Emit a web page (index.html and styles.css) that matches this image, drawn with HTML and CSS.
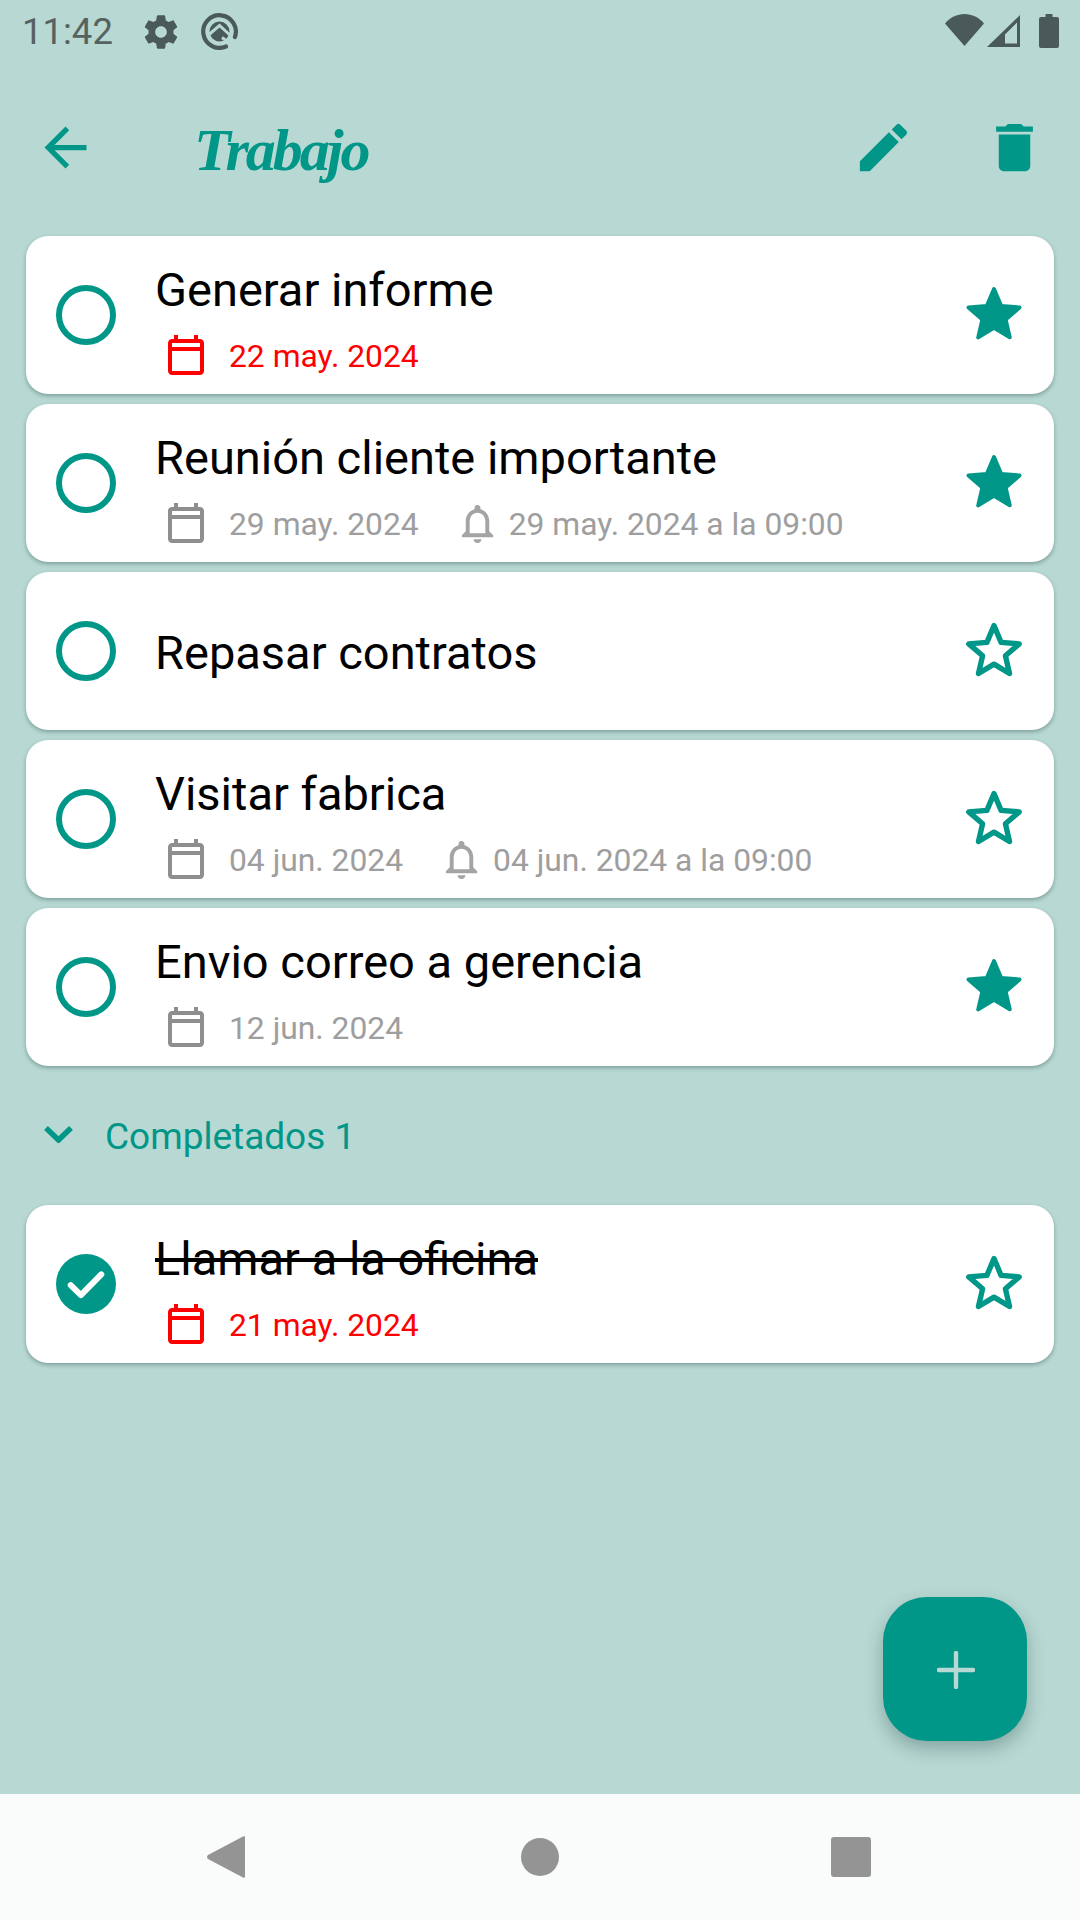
FILE: index.html
```html
<!DOCTYPE html>
<html lang="es">
<head>
<meta charset="utf-8">
<title>Trabajo</title>
<link rel="stylesheet" href="styles.css">
</head>
<body>
<!-- iconos reutilizables -->
<svg class="sprite" width="0" height="0">
  <symbol id="i-radio" viewBox="0 0 24 24"><circle cx="12" cy="12" r="9" fill="none" stroke="currentColor" stroke-width="2"/></symbol>
  <symbol id="i-done" viewBox="0 0 24 24"><circle cx="12" cy="12" r="10" fill="currentColor"/><path d="M6.900 12.400l3.400 3.300 6.800-6.900" fill="none" stroke="#fff" stroke-width="2" stroke-linecap="round" stroke-linejoin="round"/></symbol>
  <symbol id="i-star" viewBox="0 0 24 24"><path d="M12 3.200l2.550 5.950 6.450.55-4.900 4.250 1.470 6.300L12 16.900l-5.570 3.350 1.470-6.300L3 9.700l6.450-.55z" fill="currentColor" stroke="currentColor" stroke-width="1.400" stroke-linejoin="round"/></symbol>
  <symbol id="i-star-o" viewBox="0 0 24 24"><path d="M12 3.400l2.500 5.900 6.400.55-4.870 4.200 1.460 6.250L12 17l-5.490 3.300 1.460-6.250L3.100 9.850l6.400-.55z" fill="none" stroke="currentColor" stroke-width="1.900" stroke-linejoin="round"/></symbol>
  <symbol id="i-cal" viewBox="0 0 24 24"><path d="M19 4h-1V2h-2v2H8V2H6v2H5c-1.100 0-2 .9-2 2v14c0 1.100.9 2 2 2h14c1.100 0 2-.9 2-2V6c0-1.100-.9-2-2-2zm0 16H5V10h14v10zm0-12H5V6h14v2z" fill="currentColor"/></symbol>
  <symbol id="i-bell" viewBox="0 0 24 24"><path d="M12 22c1.100 0 2-.9 2-2h-4c0 1.100.9 2 2 2zm6-6v-5c0-3.070-1.630-5.640-4.500-6.320V4c0-.83-.67-1.500-1.500-1.500s-1.500.67-1.500 1.500v.68C7.640 5.360 6 7.920 6 11v5l-2 2v1h16v-1l-2-2zm-2 1H8v-6c0-2.480 1.510-4.500 4-4.500s4 2.020 4 4.500v6z" fill="currentColor"/></symbol>
</svg>

<div class="screen">
  <div class="status">
    <span class="time">11:42</span>
    <svg class="st-gear" viewBox="0 0 24 24"><path fill="currentColor" d="M19.430 12.980c.04-.32.07-.64.07-.98s-.03-.66-.07-.98l2.110-1.650c.19-.15.24-.42.12-.64l-2-3.460c-.12-.22-.39-.3-.61-.22l-2.490 1c-.52-.4-1.080-.73-1.690-.98l-.38-2.650C14.460 2.180 14.250 2 14 2h-4c-.25 0-.46.18-.49.42l-.38 2.650c-.61.25-1.170.59-1.690.98l-2.490-1c-.23-.09-.49 0-.61.22l-2 3.460c-.13.22-.07.49.12.64l2.110 1.650c-.04.32-.07.65-.07.98s.03.66.07.98l-2.110 1.650c-.19.15-.24.42-.12.64l2 3.460c.12.22.39.3.61.22l2.490-1c.52.4 1.080.73 1.690.98l.38 2.650c.03.24.24.42.49.42h4c.25 0 .46-.18.49-.42l.38-2.650c.61-.25 1.170-.59 1.690-.98l2.490 1c.23.09.49 0 .61-.22l2-3.460c.12-.22.07-.49-.12-.64l-2.110-1.650zM12 15.500c-1.930 0-3.500-1.570-3.500-3.500s1.570-3.500 3.500-3.500 3.500 1.570 3.500 3.500-1.570 3.500-3.500 3.500z"/></svg>
    <svg class="st-q" viewBox="0 0 37 37">
      <path d="M25 33.500A16.300 16.300 0 1 1 33.900 24" fill="none" stroke="currentColor" stroke-width="4.200" stroke-linecap="round"/>
      <circle cx="18.500" cy="18.500" r="10" fill="currentColor"/>
      <path d="M8 21.500L18.500 12.500l11 10" fill="none" stroke="#b8d8d3" stroke-width="3"/>
      <path d="M21 24.500l8 6" fill="none" stroke="#b8d8d3" stroke-width="3"/>
    </svg>
    <span class="st-fill"></span>
    <svg class="st-wifi" viewBox="0 0 39 32"><path fill="currentColor" d="M0 9.500C5 3.500 12 0 19.500 0S34 3.500 39 9.500L19.500 32z"/></svg>
    <svg class="st-signal" viewBox="0 0 33 32"><path fill="currentColor" fill-rule="evenodd" d="M33 0v32H0zM30 7.500L18 19.500V28.500h12z"/></svg>
    <svg class="st-batt" viewBox="0 0 20 34"><path fill="currentColor" d="M6.500 0h7v3H18a2 2 0 0 1 2 2v27a2 2 0 0 1-2 2H2a2 2 0 0 1-2-2V5a2 2 0 0 1 2-2h4.500z"/></svg>
  </div>

  <div class="toolbar">
    <svg class="tb-back" viewBox="0 0 24 24"><path fill="currentColor" d="M20 11H7.830l5.590-5.590L12 4l-8 8 8 8 1.410-1.410L7.830 13H20v-2z"/></svg>
    <h1 class="tb-title">Trabajo</h1>
    <svg class="tb-edit" viewBox="0 0 24 24"><path fill="currentColor" d="M3 17.250V21h3.750L17.810 9.940l-3.750-3.750L3 17.250zM20.710 7.040a1 1 0 0 0 0-1.410l-2.340-2.340a1 1 0 0 0-1.410 0l-1.830 1.830 3.750 3.750 1.830-1.830z"/></svg>
    <svg class="tb-del" viewBox="0 0 24 24"><path fill="currentColor" d="M6 19c0 1.100.9 2 2 2h8c1.100 0 2-.9 2-2V7H6v12zM19 4h-3.500l-1-1h-5l-1 1H5v2h14V4z"/></svg>
  </div>

  <div class="list">
    <div class="card">
      <svg class="check"><use href="#i-radio"/></svg>
      <div class="body">
        <div class="title">Generar informe</div>
        <div class="meta late">
          <svg class="ico-cal"><use href="#i-cal"/></svg><span>22 may. 2024</span>
        </div>
      </div>
      <svg class="star"><use href="#i-star"/></svg>
    </div>
    <div class="card">
      <svg class="check"><use href="#i-radio"/></svg>
      <div class="body">
        <div class="title">Reunión cliente importante</div>
        <div class="meta">
          <svg class="ico-cal"><use href="#i-cal"/></svg><span>29 may. 2024</span>
          <svg class="ico-bell"><use href="#i-bell"/></svg><span class="remind">29 may. 2024 a la 09:00</span>
        </div>
      </div>
      <svg class="star"><use href="#i-star"/></svg>
    </div>
    <div class="card">
      <svg class="check"><use href="#i-radio"/></svg>
      <div class="body body-single">
        <div class="title">Repasar contratos</div>
      </div>
      <svg class="star"><use href="#i-star-o"/></svg>
    </div>
    <div class="card">
      <svg class="check"><use href="#i-radio"/></svg>
      <div class="body">
        <div class="title">Visitar fabrica</div>
        <div class="meta">
          <svg class="ico-cal"><use href="#i-cal"/></svg><span>04 jun. 2024</span>
          <svg class="ico-bell"><use href="#i-bell"/></svg><span class="remind">04 jun. 2024 a la 09:00</span>
        </div>
      </div>
      <svg class="star"><use href="#i-star-o"/></svg>
    </div>
    <div class="card">
      <svg class="check"><use href="#i-radio"/></svg>
      <div class="body">
        <div class="title">Envio correo a gerencia</div>
        <div class="meta">
          <svg class="ico-cal"><use href="#i-cal"/></svg><span>12 jun. 2024</span>
        </div>
      </div>
      <svg class="star"><use href="#i-star"/></svg>
    </div>
  </div>

  <div class="done-head">
    <svg class="chevron" viewBox="0 0 31 18"><path d="M3 3l12.500 12L28 3" fill="none" stroke="currentColor" stroke-width="5.500"/></svg>
    <span>Completados 1</span>
  </div>

  <div class="list">
    <div class="card">
      <svg class="check"><use href="#i-done"/></svg>
      <div class="body">
        <div class="title striked">Llamar a la oficina</div>
        <div class="meta late">
          <svg class="ico-cal"><use href="#i-cal"/></svg><span>21 may. 2024</span>
        </div>
      </div>
      <svg class="star"><use href="#i-star-o"/></svg>
    </div>
  </div>

  <div class="spacer"></div>

  <div class="navbar">
    <svg class="nav-back" viewBox="0 0 38 42"><path fill="currentColor" d="M36 .500c1-.8 2-.2 2 1v39c0 1.200-1 1.800-2 1L1 23c-1.300-1-1.300-3 0-4z"/></svg>
    <span class="nav-home"></span>
    <span class="nav-recent"></span>
  </div>

  <div class="fab">
    <svg viewBox="0 0 38 38"><path d="M19 2v34M2 19h34" stroke="currentColor" stroke-width="4.400" stroke-linecap="round"/></svg>
  </div>
</div>
</body>
</html>
```

FILE: styles.css
```css
* {margin:0; padding:0; box-sizing:border-box;}
html, body {width:1080px; height:1920px; overflow:hidden;}
body {background:#b8d8d3; font-family:Roboto, "Noto Sans", sans-serif;}
.sprite {position:absolute;}
svg {display:block; flex:none;}

.screen {position:relative; width:1080px; height:1920px; display:flex; flex-direction:column;}

/* barra de estado */
.status {height:60px; display:flex; align-items:flex-start; color:#4a5a58;}
.time {margin:11px 0 0 22px; width:91px; font-size:36.5px; line-height:42px; color:#56625f;}
.st-gear {width:40px; height:40px; margin:12px 0 0 28px;}
.st-q {width:37px; height:37px; margin:13px 0 0 20px;}
.st-fill {flex:1;}
.st-wifi {width:39px; height:32px; margin:14px 0 0 0;}
.st-signal {width:33px; height:32px; margin:15px 0 0 3px;}
.st-batt {width:20px; height:34px; margin:14px 21px 0 19px;}

/* cabecera */
.toolbar {height:176px; display:flex; align-items:center; color:#009688; padding-bottom:2px;}
.tb-back {width:63px; height:63px; margin-left:34px;}
.tb-title {flex:1; margin:6px 0 0 97px; font-size:60px; letter-spacing:-3px; line-height:80px; font-weight:700; font-style:italic; font-family:"Liberation Serif", serif;}
.tb-edit {width:63px; height:63px;}
.tb-del {width:63px; height:63px; margin:0 34px 0 68px;}

/* tarjetas */
.list {display:flex; flex-direction:column; gap:10px; padding:0 26px;}
.card {height:158px; background:#fff; border-radius:22px; display:flex; align-items:center; padding:0 26px 0 24px; box-shadow:0 2px 4px rgba(0,40,40,.32);}
.check {width:72px; height:72px; color:#009688; margin-top:-1px;}
.star {width:68px; height:68px; color:#009688; margin-top:-2px;}
.body {flex:1; align-self:stretch; margin-left:33px; padding-top:26px;}
.body-single {padding-top:53px;}
.title {font-size:47px; line-height:56px; color:#000;}
.striked {text-decoration:line-through;}
.meta {display:flex; align-items:center; height:48px; margin-top:13px; padding-left:7px; font-size:31.8px; color:#9e9e9e;}
.meta span {margin-top:2px;}
.meta.late {color:#f00;}
.ico-cal {width:48px; height:48px; margin-right:19px; color:#8e8e8e;}
.late .ico-cal {color:#f00;}
.ico-bell {width:47px; height:47px; margin-left:35px; color:#a4a4a4;}
.remind {margin-left:8px;}

.done-head {height:139px; display:flex; align-items:center; color:#009688; font-size:37px; padding-left:43px;}
.chevron {width:31px; height:18px; margin-right:31px; margin-top:-3px;}
.done-head span {margin-top:2px;}

.spacer {flex:1;}

/* barra de navegación */
.navbar {height:126px; background:#fafcfb; display:flex; align-items:center; padding:0 0 0 207px; color:#949494;}
.nav-back {width:38px; height:42px;}
.nav-home {width:38px; height:38px; border-radius:50%; background:#949494; margin-left:276px;}
.nav-recent {width:40px; height:40px; border-radius:3px; background:#949494; margin-left:272px;}

.fab {position:absolute; left:883px; top:1597px; width:144px; height:144px; border-radius:44px; background:#009688; color:#b8d8d3; display:flex; align-items:center; justify-content:center; box-shadow:0 8px 18px rgba(0,40,40,.28);}
.fab svg {width:38px; height:38px; margin:2px 0 0 2px;}
```
